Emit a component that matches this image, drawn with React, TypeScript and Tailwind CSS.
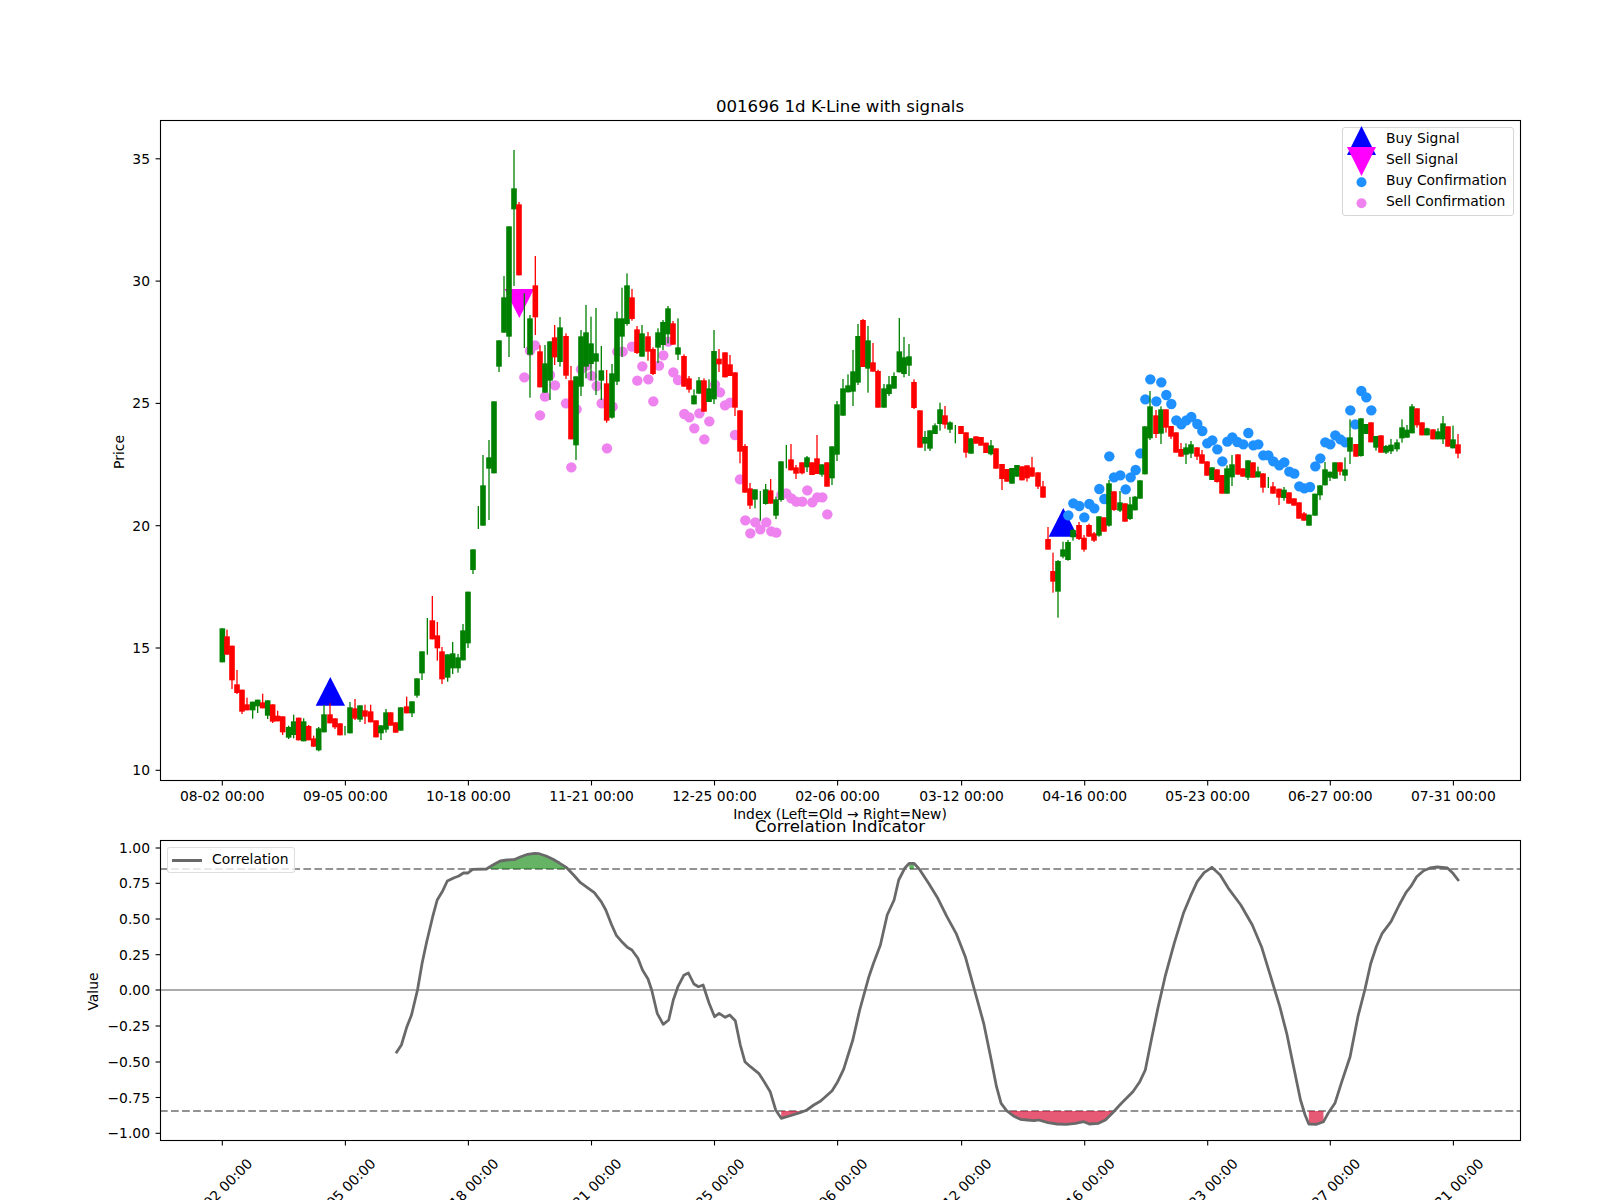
const GREEN = "#008000"
const RED = "#ff0000"
const BLUE = "#0000ff"
const MAGENTA = "#ff00ff"
const DODGER = "#1e90ff"
const VIOLET = "#ee82ee"

type Row = [number, number, number, number, number, number]
type Segment = { ox: number; oy: number; rows: Row[] }

// x, red?, body top, body bottom, wick top, wick bottom. Values are 3x pixels from the segment origin.
const SEGMENTS: Segment[] = [
  {
    ox: 140,
    oy: 560,
    rows: [
      [247, 0, 205, 307, 205, 307], [261, 1, 229, 284, 209, 284], [276, 1, 257, 361, 257, 387], [291, 1, 373, 399, 330, 402],
      [306, 1, 389, 455, 389, 462], [321, 1, 433, 451, 413, 451], [338, 0, 425, 451, 425, 476], [353, 0, 419, 439, 419, 459],
      [368, 1, 427, 445, 401, 445], [383, 0, 421, 467, 421, 477], [398, 1, 433, 485, 433, 489], [413, 1, 467, 484, 452, 484],
      [428, 1, 469, 517, 469, 525], [446, 0, 501, 533, 497, 537], [461, 0, 484, 525, 464, 535], [476, 1, 473, 541, 473, 541],
      [491, 0, 484, 544, 475, 544], [506, 1, 498, 541, 495, 541], [521, 1, 535, 560, 527, 560], [536, 0, 505, 571, 501, 574],
      [552, 0, 463, 517, 435, 517], [570, 1, 463, 490, 430, 490], [585, 1, 475, 502, 475, 507], [600, 1, 490, 526, 490, 526],
      [615, 0, 0, 0, 498, 526], [630, 0, 442, 520, 426, 520], [645, 1, 445, 476, 417, 480], [660, 0, 436, 479, 436, 486],
      [675, 1, 451, 470, 434, 492], [692, 1, 454, 487, 434, 487], [708, 1, 481, 532, 481, 532], [723, 0, 496, 520, 496, 540],
      [738, 0, 457, 509, 447, 518], [752, 1, 457, 497, 457, 497], [767, 1, 487, 518, 487, 518], [782, 0, 442, 512, 442, 512],
      [800, 1, 439, 460, 410, 460], [816, 0, 424, 460, 424, 471], [831, 0, 355, 407, 355, 413], [846, 0, 274, 340, 274, 360],
      [862, 0, 0, 0, 174, 284], [877, 1, 181, 238, 108, 238], [892, 1, 226, 265, 186, 302], [906, 1, 274, 358, 261, 372],
      [923, 0, 283, 353, 283, 365], [938, 0, 280, 325, 246, 342], [954, 0, 292, 325, 282, 338], [969, 0, 211, 301, 192, 301],
      [984, 0, 95, 250, 95, 264],
    ],
  },
  {
    ox: 440,
    oy: 380,
    rows: [
      [99, 0, 508, 570, 508, 582], [115, 0, 0, 0, 378, 447], [129, 0, 316, 437, 225, 437], [147, 0, 232, 266, 180, 420],
      [162, 0, 64, 280, 64, 280],
    ],
  },
  {
    ox: 460,
    oy: 120,
    rows: [
      [117, 0, 661, 740, 661, 756], [132, 0, 532, 638, 468, 638], [147, 0, 319, 650, 319, 711], [162, 0, 205, 268, 90, 498],
      [177, 1, 253, 466, 246, 466], [193, 0, 0, 0, 520, 684], [210, 0, 595, 704, 585, 833], [226, 1, 496, 592, 408, 645],
      [240, 1, 694, 802, 676, 802], [255, 0, 730, 818, 675, 818], [270, 0, 664, 782, 664, 840], [284, 1, 652, 712, 615, 735],
      [300, 0, 622, 726, 591, 740], [318, 1, 648, 767, 640, 777], [333, 1, 781, 958, 738, 958], [348, 0, 769, 976, 769, 1020],
      [363, 0, 649, 800, 630, 828], [378, 0, 637, 740, 555, 775], [393, 0, 670, 732, 590, 780], [408, 0, 700, 725, 564, 825],
      [424, 0, 751, 782, 678, 840], [440, 1, 790, 902, 750, 908], [456, 0, 760, 893, 732, 896], [471, 0, 595, 785, 575, 795],
      [486, 0, 595, 650, 503, 711], [501, 0, 496, 612, 460, 617], [516, 1, 532, 597, 507, 602], [531, 1, 628, 699, 618, 702],
      [546, 0, 640, 710, 615, 710], [564, 1, 649, 695, 636, 722], [579, 1, 687, 762, 682, 765], [594, 0, 637, 683, 625, 729],
      [609, 0, 606, 675, 600, 690], [624, 0, 565, 643, 558, 670], [639, 1, 610, 674, 603, 674], [654, 0, 682, 704, 595, 720],
      [672, 1, 708, 800, 703, 800], [687, 1, 775, 809, 768, 818], [702, 0, 826, 853, 808, 853], [717, 0, 781, 821, 771, 821],
      [732, 1, 781, 875, 775, 875], [747, 0, 805, 846, 778, 846], [762, 0, 693, 838, 630, 852], [777, 1, 716, 733, 687, 756],
      [795, 1, 697, 772, 697, 772], [810, 1, 733, 768, 705, 768], [825, 1, 757, 863, 757, 888], [840, 1, 871, 995, 871, 1030],
    ],
  },
  {
    ox: 700,
    oy: 300,
    rows: [
      [135, 1, 438, 578, 432, 578], [150, 1, 565, 617, 549, 627], [165, 0, 568, 599, 568, 625], [181, 0, 0, 0, 573, 662],
      [197, 0, 568, 612, 552, 614], [212, 1, 571, 611, 537, 611], [228, 0, 598, 647, 590, 657], [243, 0, 484, 600, 484, 605],
      [259, 0, 0, 0, 435, 505], [273, 1, 478, 511, 432, 511], [288, 1, 502, 521, 495, 537], [306, 1, 487, 520, 487, 523],
      [321, 0, 472, 502, 468, 516], [336, 1, 487, 525, 487, 525], [351, 1, 475, 522, 405, 522], [366, 0, 493, 524, 493, 530],
      [381, 1, 487, 560, 487, 560], [396, 0, 439, 535, 439, 555], [411, 0, 313, 464, 303, 483], [429, 0, 265, 347, 237, 347],
      [444, 0, 256, 277, 223, 277], [459, 0, 214, 275, 150, 318], [474, 0, 108, 248, 72, 255], [489, 1, 60, 201, 57, 201],
      [504, 0, 121, 206, 78, 278], [519, 1, 187, 215, 129, 215], [534, 1, 213, 323, 209, 323], [552, 0, 265, 323, 252, 323],
      [567, 0, 253, 282, 228, 288], [582, 0, 228, 266, 217, 266], [598, 0, 154, 217, 54, 217], [612, 0, 172, 222, 111, 232],
      [627, 0, 169, 197, 132, 228], [642, 1, 246, 324, 238, 327], [660, 1, 331, 443, 331, 443], [675, 0, 411, 431, 393, 453],
      [690, 0, 391, 446, 391, 453], [705, 0, 376, 402, 370, 402], [720, 0, 328, 372, 308, 392], [735, 1, 346, 374, 318, 386],
      [750, 0, 367, 389, 364, 399], [766, 0, 0, 0, 375, 430], [783, 1, 378, 402, 378, 402], [798, 1, 397, 458, 397, 473],
      [813, 0, 415, 461, 415, 461], [828, 1, 409, 431, 409, 431], [843, 1, 411, 437, 411, 437], [858, 1, 428, 459, 428, 459],
      [873, 0, 436, 463, 420, 466], [888, 1, 445, 506, 445, 506], [906, 1, 492, 537, 492, 570], [921, 1, 507, 545, 507, 545],
      [936, 0, 504, 551, 504, 551], [951, 0, 495, 530, 495, 530], [966, 1, 499, 541, 499, 541], [981, 1, 496, 535, 496, 545],
      [996, 1, 502, 530, 471, 530], [1014, 1, 517, 560, 517, 567], [1029, 1, 559, 593, 543, 593],
    ],
  },
  {
    ox: 1040,
    oy: 360,
    rows: [
      [24, 1, 537, 569, 501, 569], [39, 1, 633, 665, 578, 698], [54, 0, 603, 695, 600, 773], [69, 0, 568, 590, 545, 595],
      [84, 0, 546, 600, 540, 602], [99, 0, 510, 532, 507, 542], [117, 1, 495, 537, 486, 540], [132, 1, 533, 569, 525, 575],
      [147, 1, 495, 530, 491, 530], [162, 1, 520, 542, 516, 546], [177, 0, 469, 527, 469, 530], [192, 1, 472, 515, 472, 515],
      [207, 0, 370, 497, 360, 500], [222, 1, 394, 450, 394, 453], [240, 0, 427, 452, 393, 456], [255, 1, 430, 485, 430, 485],
      [270, 0, 433, 477, 411, 480], [285, 0, 410, 451, 408, 451], [300, 0, 361, 416, 361, 416], [315, 0, 199, 343, 199, 343],
      [330, 0, 139, 235, 93, 240], [348, 1, 166, 222, 150, 234], [363, 0, 148, 221, 139, 252], [378, 1, 148, 203, 148, 218],
      [393, 1, 198, 230, 198, 237], [408, 1, 217, 278, 217, 278], [423, 1, 267, 290, 249, 290], [438, 0, 262, 284, 250, 312],
      [453, 0, 253, 281, 243, 294], [471, 1, 262, 290, 262, 300], [486, 1, 283, 311, 270, 311], [501, 1, 304, 347, 304, 347],
      [516, 0, 322, 360, 322, 360], [531, 1, 328, 366, 328, 368], [546, 1, 345, 401, 345, 401], [561, 0, 325, 401, 316, 401],
      [576, 0, 313, 352, 285, 378], [594, 1, 283, 344, 283, 344], [609, 1, 325, 350, 325, 350], [624, 0, 301, 353, 301, 360],
      [639, 1, 307, 353, 307, 353], [654, 0, 334, 352, 320, 352], [669, 1, 340, 383, 340, 398], [685, 0, 0, 0, 351, 384],
      [699, 1, 379, 401, 366, 401], [717, 1, 386, 413, 386, 435], [732, 0, 389, 414, 381, 422], [747, 1, 397, 431, 397, 431],
      [762, 1, 415, 437, 415, 437], [777, 1, 427, 476, 427, 476], [792, 1, 460, 482, 456, 482], [807, 0, 464, 497, 464, 497],
      [825, 0, 401, 467, 401, 467], [840, 0, 376, 406, 376, 420], [855, 0, 328, 376, 306, 376], [870, 0, 335, 353, 335, 363],
      [885, 0, 307, 356, 307, 356], [900, 1, 307, 335, 307, 346], [915, 0, 328, 347, 292, 363], [930, 0, 232, 275, 178, 312],
      [948, 1, 252, 290, 252, 290], [963, 0, 175, 288, 175, 290], [978, 0, 192, 222, 192, 222], [993, 1, 187, 247, 187, 247],
      [1008, 0, 228, 263, 228, 272], [1023, 1, 226, 278, 226, 278], [1038, 0, 258, 278, 255, 282], [1053, 0, 254, 274, 237, 282],
      [1071, 0, 247, 268, 238, 275], [1086, 0, 202, 235, 178, 248], [1101, 0, 209, 233, 195, 233], [1116, 0, 139, 220, 132, 220],
      [1131, 1, 145, 196, 145, 203], [1146, 1, 187, 226, 187, 226], [1161, 0, 205, 226, 203, 226], [1179, 1, 208, 238, 208, 238],
      [1194, 0, 214, 238, 205, 238], [1209, 0, 190, 238, 168, 252], [1224, 1, 199, 260, 199, 260], [1239, 0, 238, 265, 197, 265],
      [1254, 1, 253, 281, 222, 295],
    ],
  },
]

const VIOLET_A = [
  [225, 676], [210, 692], [193, 772], [270, 765], [363, 748], [380, 737], [395, 768], [472, 695], [488, 695], [516, 680],
  [547, 739], [597, 737], [610, 706], [625, 665], [640, 757],
].map(([x, y]) => [460 + x / 3, 120 + y / 3])

const VIOLET_B = [
  [345, 16], [315, 50], [300, 106], [378, 70], [410, 88], [394, 262], [470, 18], [485, 70], [518, 80], [501, 205], [592, 2],
  [625, -2], [640, 64], [714, 0], [733, 102], [748, 112], [778, 100], [763, 145], [808, 124], [793, 178], [825, 14], [840, 37],
  [855, 76], [870, 68], [885, 165], [900, 298], [916, 421], [946, 427], [931, 460], [961, 448], [979, 427], [994, 454],
  [1009, 458], [1024, 345], [1039, 340], [1054, 355], [1069, 365], [1087, 365], [1102, 331], [1117, 367], [1132, 352],
  [1147, 352], [1162, 403],
].map(([x, y]) => [440 + x / 3, 380 + y / 3])

const BLUE_DOTS = [
  [85, 466], [100, 430], [118, 438], [133, 472], [148, 432], [163, 445], [178, 387], [193, 417], [208, 289], [222, 352],
  [241, 346], [257, 388], [272, 352], [287, 330], [301, 280], [316, 118], [331, 58], [349, 124], [364, 67], [379, 105],
  [394, 132], [409, 181], [424, 193], [439, 181], [454, 171], [472, 192], [487, 213], [502, 250], [517, 241], [532, 268],
  [547, 304], [562, 245], [577, 232], [592, 246], [610, 253], [625, 219], [640, 256], [655, 253], [670, 286], [685, 286],
  [700, 304], [718, 316], [733, 307], [748, 335], [763, 341], [778, 379], [793, 385], [810, 381], [826, 319], [841, 295],
  [856, 247], [871, 253], [886, 226], [901, 238], [916, 247], [931, 151], [946, 193], [964, 93], [979, 112], [994, 151],
].map(([x, y]) => [1040 + x / 3, 360 + y / 3])

const CURVE_A = [
  [688, 760], [700, 735], [712, 680], [722, 645], [735, 570], [745, 490], [755, 425], [768, 350], [778, 300], [790, 272],
  [800, 243], [815, 233], [825, 228], [835, 219], [845, 219], [855, 208], [885, 207], [900, 194], [915, 183], [930, 180],
  [945, 179], [960, 170], [975, 163], [990, 160], [1000, 161], [1015, 168], [1030, 178], [1045, 190], [1060, 203], [1075, 225],
  [1090, 248], [1105, 263], [1120, 278], [1135, 305], [1145, 330], [1158, 375], [1168, 406], [1180, 425], [1192, 442], [1202, 450],
  [1215, 475], [1225, 510], [1237, 537], [1245, 570], [1257, 640], [1270, 673], [1282, 660], [1292, 600], [1302, 560], [1315, 526],
  [1325, 519], [1337, 552], [1347, 560], [1357, 555], [1370, 610], [1382, 650], [1392, 640], [1405, 652], [1415, 645], [1427, 662],
  [1438, 735], [1448, 785], [1460, 800], [1478, 820], [1490, 845], [1503, 875], [1515, 930], [1527, 955], [1545, 948],
].map(([x, y]) => [80 + (x * 720) / 1568, 800 + y / 3])

const CURVE_B = [
  [0, 938], [15, 930], [30, 915], [45, 903], [70, 872], [82, 845], [95, 808], [115, 720], [130, 630], [150, 530], [160, 490],
  [175, 435], [190, 345], [205, 300], [215, 240], [228, 205], [238, 190], [248, 190], [260, 208], [280, 250], [300, 295], [320, 350],
  [340, 400], [360, 470], [380, 570], [400, 670], [415, 770], [428, 860], [438, 910], [450, 932], [465, 948], [480, 958], [495, 960],
  [510, 962], [520, 960], [540, 968], [560, 972], [580, 973], [600, 970], [618, 965], [630, 972], [650, 970], [665, 960], [680, 940],
  [700, 910], [725, 875], [740, 845], [752, 810], [765, 720], [780, 620], [795, 530], [815, 430], [835, 340], [850, 290], [865, 245],
  [880, 218], [897, 202], [915, 225], [933, 265], [960, 315], [985, 375], [1005, 440], [1025, 530], [1045, 620], [1060, 700],
  [1075, 800], [1090, 900], [1100, 945], [1108, 972], [1125, 973], [1140, 965], [1150, 940], [1165, 910], [1180, 845], [1198, 770],
  [1215, 650], [1230, 570], [1243, 490], [1255, 440], [1268, 400], [1287, 365], [1305, 315], [1320, 277], [1330, 260], [1343, 230],
  [1358, 212], [1372, 204], [1388, 201], [1410, 204], [1422, 220], [1435, 243],
].map(([x, y]) => [800 + (x * 720) / 1568, 800 + y / 3])

const CURVE = [...CURVE_A, ...CURVE_B]
const pts = (list: number[][]) => list.map(([x, y]) => `${x.toFixed(1)},${y.toFixed(1)}`).join(" ")

const HI_Y = 869
const LO_Y = 1111

const area = (x0: number, x1: number, base: number) => {
  const inside = CURVE.filter(([x]) => x >= x0 && x <= x1)
  return pts([[inside[0][0], base], ...inside, [inside[inside.length - 1][0], base]])
}

const TICK_X = [222.3, 345.4, 468.4, 591.5, 714.5, 837.6, 961.6, 1084.7, 1207.7, 1330.3, 1453.4]
const DATES = ["08-02", "09-05", "10-18", "11-21", "12-25", "02-06", "03-12", "04-16", "05-23", "06-27", "07-31"]
const PRICE_TICKS = [10, 15, 20, 25, 30, 35]
const VALUE_TICKS = ["1.00", "0.75", "0.50", "0.25", "0.00", "−0.25", "−0.50", "−0.75", "−1.00"]
const VALUE_Y = [848, 883.3, 919, 954.7, 990, 1026, 1062, 1097.5, 1133.3]

function Candles() {
  return (
    <>
      {SEGMENTS.flatMap((seg) =>
        seg.rows.map(([x, red, bt, bb, wt, wb]) => {
          const cx = seg.ox + x / 3
          const color = red ? RED : GREEN
          return (
            <g key={cx}>
              <rect x={cx - 0.65} y={seg.oy + wt / 3} width={1.3} height={(wb - wt) / 3} fill={color} />
              {bb > bt && <rect x={cx - 2.8} y={seg.oy + bt / 3} width={5.6} height={(bb - bt) / 3} fill={color} />}
            </g>
          )
        })
      )}
    </>
  )
}

function PriceChart() {
  return (
    <svg viewBox="0 0 1600 825" className="block w-[1600px] h-[825px] overflow-visible shrink-0">
      <polygon points="330.3,677 315.7,705.7 345,705.7" fill={BLUE} />
      <polygon points="1063.3,508 1048.7,536.7 1078,536.7" fill={BLUE} />
      <polygon points="504.7,289 534,289 519.3,318" fill={MAGENTA} />
      {BLUE_DOTS.map(([x, y], i) => (
        <circle key={i} cx={x} cy={y} r={5.2} fill={DODGER} />
      ))}
      {[...VIOLET_A, ...VIOLET_B].map(([x, y], i) => (
        <circle key={i} cx={x} cy={y} r={5.2} fill={VIOLET} />
      ))}
      <Candles />
      <rect x={160.5} y={120.5} width={1360} height={660} fill="none" stroke="#000" strokeWidth={1.1} />
      {PRICE_TICKS.map((p) => {
        const y = 770.3 - (p - 10) * 24.46
        return (
          <g key={p}>
            <line x1={155.6} x2={160} y1={y} y2={y} stroke="#000" strokeWidth={1.1} />
            <text x={150} y={y + 5} textAnchor="end">
              {p}
            </text>
          </g>
        )
      })}
      {TICK_X.map((x, i) => (
        <g key={x}>
          <line x1={x} x2={x} y1={781} y2={785.5} stroke="#000" strokeWidth={1.1} />
          <text x={x} y={800.7} textAnchor="middle">
            {DATES[i]} 00:00
          </text>
        </g>
      ))}
      <text x={840} y={111.7} textAnchor="middle" className="text-[16.6px]">
        001696 1d K-Line with signals
      </text>
      <text x={840} y={819} textAnchor="middle">
        Index (Left=Old → Right=New)
      </text>
      <text transform="translate(124 452) rotate(-90)" textAnchor="middle">
        Price
      </text>
    </svg>
  )
}

function CorrelationChart() {
  return (
    <svg viewBox="0 825 1600 375" className="block w-[1600px] h-[375px] overflow-visible shrink-0">
      <line x1={160} x2={1520} y1={990} y2={990} stroke="#ababab" strokeWidth={2.08} />
      <line x1={160} x2={1520} y1={HI_Y} y2={HI_Y} stroke="#939393" strokeWidth={2.08} strokeDasharray="7.7 3.33" />
      <line x1={160} x2={1520} y1={LO_Y} y2={LO_Y} stroke="#939393" strokeWidth={2.08} strokeDasharray="7.7 3.33" />
      <polygon points={area(486, 567, HI_Y)} fill="green" fillOpacity={0.6} />
      <polygon points={area(909, 914, HI_Y)} fill="green" fillOpacity={0.6} />
      <polygon points={area(781, 807, LO_Y)} fill="crimson" fillOpacity={0.7} />
      <polygon points={area(1006, 1113, LO_Y)} fill="crimson" fillOpacity={0.7} />
      <polygon points={area(1308, 1324, LO_Y)} fill="crimson" fillOpacity={0.7} />
      <polyline points={pts(CURVE)} fill="none" stroke="#696969" strokeWidth={2.78} strokeLinejoin="round" />
      <rect x={160.5} y={840.5} width={1360} height={300} fill="none" stroke="#000" strokeWidth={1.1} />
      {VALUE_TICKS.map((label, i) => (
        <g key={label}>
          <line x1={155.6} x2={160} y1={VALUE_Y[i]} y2={VALUE_Y[i]} stroke="#000" strokeWidth={1.1} />
          <text x={150} y={VALUE_Y[i] + 5} textAnchor="end">
            {label}
          </text>
        </g>
      ))}
      {TICK_X.map((x, i) => (
        <g key={x}>
          <line x1={x} x2={x} y1={1141} y2={1145.5} stroke="#000" strokeWidth={1.1} />
          <text transform={`translate(${x - 2.5} 1191) rotate(-45)`} textAnchor="middle" dy={5}>
            {DATES[i]} 00:00
          </text>
        </g>
      ))}
      <text x={840} y={831.7} textAnchor="middle" className="text-[16.6px]">
        Correlation Indicator
      </text>
      <text transform="translate(98 991.5) rotate(-90)" textAnchor="middle">
        Value
      </text>
    </svg>
  )
}

function LegendRow({ label, children }: { label: string; children?: React.ReactNode }) {
  return (
    <div className="flex items-center h-[21px]">
      <svg viewBox="0 0 29 21" className="w-[29px] h-[21px] ml-1 mr-[10px] shrink-0 overflow-visible">
        {children}
      </svg>
      <span>{label}</span>
    </div>
  )
}

export default function App() {
  return (
    <div className="relative flex flex-col w-[1600px] h-[1200px] overflow-hidden bg-white text-black text-[13.89px] leading-none font-['DejaVu_Sans',sans-serif]">
      <PriceChart />
      <CorrelationChart />

      <div className="absolute left-[1342px] top-[127px] w-[172px] h-[89px] rounded-[3px] border border-[#d6d6d6] bg-white/80">
        <LegendRow label="Buy Signal">
          <polygon points="14.5,-2 0,27 29,27" fill={BLUE} />
          <polygon points="0,19 29,19 14.5,48" fill={MAGENTA} />
        </LegendRow>
        <LegendRow label="Sell Signal" />
        <LegendRow label="Buy Confirmation">
          <circle cx={14.5} cy={12.3} r={5} fill={DODGER} />
        </LegendRow>
        <LegendRow label="Sell Confirmation">
          <circle cx={14.5} cy={12.3} r={5} fill={VIOLET} />
        </LegendRow>
      </div>

      <div className="absolute left-[167px] top-[847px] flex items-center w-[128px] h-[26px] rounded-[3px] border border-[#d6d6d6]/80 bg-white/80">
        <span className="block w-[30px] h-[3px] ml-1 mr-[10px] bg-[#696969]" />
        <span>Correlation</span>
      </div>
    </div>
  )
}
